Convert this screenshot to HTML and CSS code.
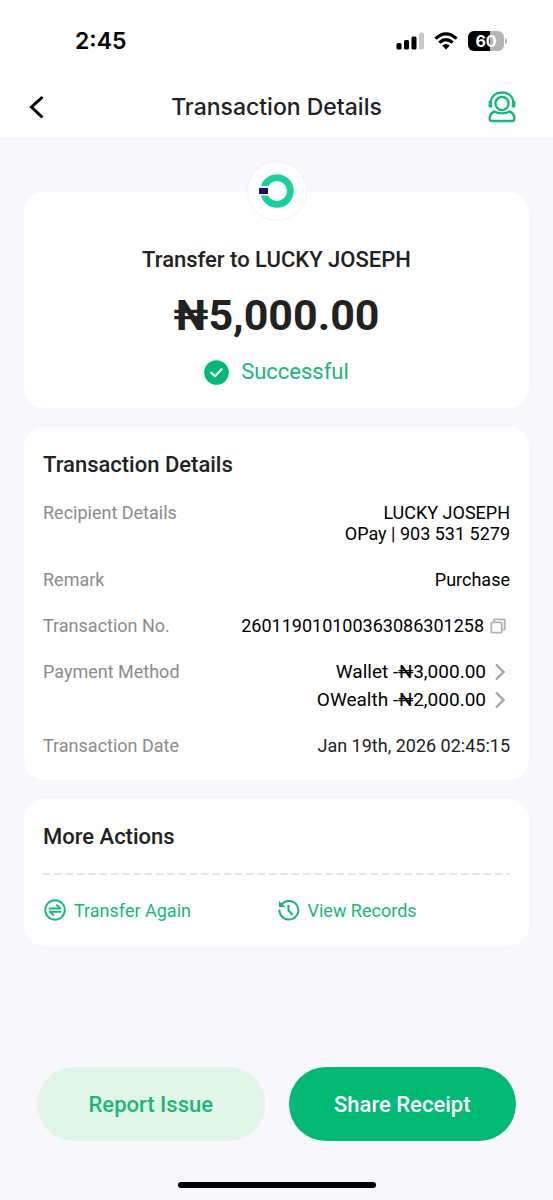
FILE: index.html
```html
<!DOCTYPE html>
<html lang="en">
<head>
<meta charset="utf-8">
<meta name="viewport" content="width=device-width, initial-scale=1">
<title>Transaction Details</title>
<link rel="stylesheet" href="styles.css">
</head>
<body>
<div class="screen">
  <header class="top">
    <div class="status">
      <span class="time">2:45</span>
      <div class="status-icons">
        <svg width="28" height="18" viewBox="0 0 28 18" aria-hidden="true">
          <rect x="0.500" y="11" width="5" height="6.500" rx="1.500"/>
          <rect x="8" y="8" width="5" height="9.500" rx="1.500"/>
          <rect x="15.500" y="4.500" width="5" height="13" rx="1.500"/>
          <rect x="23" y="0.500" width="5" height="17" rx="1.500" fill="#c8c8c8"/>
        </svg>
        <svg width="24" height="18" viewBox="0 0 24 18" fill="none" stroke="#000" stroke-width="3.200" aria-hidden="true">
          <path d="M1.500 6.600Q12 -3 22.500 6.600"/>
          <path d="M5.300 10.600Q12 4.600 18.700 10.600"/>
          <path d="M8.200 13.600Q12 10.400 15.800 13.600L12 17.600Z" fill="#000" stroke="none"/>
        </svg>
        <div class="battery"><span class="battery-body">60</span><span class="battery-tip"></span></div>
      </div>
    </div>
    <nav class="bar">
      <button class="icon-button" aria-label="Back">
        <svg width="32" height="32" viewBox="0 0 32 32" fill="none" stroke="#000" stroke-width="3"><path d="M20.500 6L9.500 16L20.500 26.500"/></svg>
      </button>
      <h1 class="title">Transaction Details</h1>
      <button class="icon-button support" aria-label="Support">
        <svg width="32" height="32" viewBox="0 0 32 32" fill="none" stroke="#1bb57c" stroke-width="2.400" stroke-linejoin="round">
          <circle cx="16" cy="12.500" r="6.600"/>
          <path d="M4.500 11C5.500 5 10 1.500 16 1.500S26.500 5 27.500 11"/>
          <path d="M4.400 10v6.500M27.600 10v6.500" stroke-width="3.600"/>
          <path d="M8.500 20.500C12.500 23 19.500 23 23.500 20.500C26.500 21.500 28.300 24.500 28.300 27.800Q28.300 30 26.300 30H5.700Q3.700 30 3.700 27.800C3.700 24.500 5.500 21.500 8.500 20.500Z"/>
        </svg>
      </button>
    </nav>
  </header>

  <main class="content">
    <section class="card summary">
      <div class="logo">
        <svg width="36" height="36" viewBox="0 0 36 36" aria-hidden="true">
          <circle cx="18" cy="18" r="13.400" fill="none" stroke="#1dcf9f" stroke-width="6.800"/>
          <path d="M0 13h10v9.500H0z" fill="#fff"/>
          <path d="M0 15h9v6H0z" fill="#210f60"/>
        </svg>
      </div>
      <h2 class="recipient">Transfer to LUCKY JOSEPH</h2>
      <p class="amount">₦5,000.00</p>
      <p class="state">
        <svg width="25" height="25" viewBox="0 0 25 25" fill="none" aria-hidden="true"><circle cx="12.500" cy="12.500" r="12.300" fill="#02b875"/><path d="M7.300 12.800L11 16.200L17.600 9.300" stroke="#fff" stroke-width="2.200" stroke-linecap="round" stroke-linejoin="round"/></svg>
        Successful
      </p>
    </section>

    <section class="card">
      <h2 class="heading">Transaction Details</h2>
      <dl class="details">
        <div class="row"><dt>Recipient Details</dt><dd>LUCKY JOSEPH<br>OPay | 903 531 5279</dd></div>
        <div class="row"><dt>Remark</dt><dd>Purchase</dd></div>
        <div class="row"><dt>Transaction No.</dt><dd class="line">260119010100363086301258
          <button class="copy" aria-label="Copy transaction number"><svg width="16" height="16" viewBox="0 0 16 16" fill="none" stroke="#b3b3b3" stroke-width="1.800" stroke-linejoin="round"><rect x="1.300" y="4.300" width="10.400" height="10.400" rx="1"/><path d="M4 4.300V1.300H14.700V11.700H11.700"/></svg></button></dd></div>
        <div class="row"><dt>Payment Method</dt><dd class="methods">
          <a class="line" href="#wallet">Wallet -₦3,000.00 <svg width="18" height="18" viewBox="0 0 18 18" fill="none" stroke="#a3a3a3" stroke-width="2.400"><path d="M4 1.500L11.500 9L4 16.500"/></svg></a>
          <a class="line" href="#owealth">OWealth -₦2,000.00 <svg width="18" height="18" viewBox="0 0 18 18" fill="none" stroke="#a3a3a3" stroke-width="2.400"><path d="M4 1.500L11.500 9L4 16.500"/></svg></a>
        </dd></div>
        <div class="row"><dt>Transaction Date</dt><dd class="date">Jan 19th, 2026 02:45:15</dd></div>
      </dl>
    </section>

    <section class="card">
      <h2 class="heading">More Actions</h2>
      <svg class="divider" height="2" aria-hidden="true"><line x1="0" y1="1" x2="100%" y2="1" stroke="#e6e6e6" stroke-width="2" stroke-dasharray="7.300 4"/></svg>
      <div class="actions">
        <a class="action" href="#transfer">
          <svg width="24" height="24" viewBox="0 0 24 24" fill="none" stroke="#1bb57c" stroke-width="1.900" stroke-linecap="round" stroke-linejoin="round"><circle cx="12" cy="12" r="9.800"/><path d="M6.500 10.500H17.500L13.800 7.300M6.800 13.700H17.300M6.800 13.700L10.400 16.900"/></svg>
          Transfer Again</a>
        <a class="action" href="#records">
          <svg width="24" height="24" viewBox="0 0 24 24" fill="none" stroke="#1bb57c" stroke-width="2"><path d="M2.300 11.500C2.300 17.300 6.600 21.500 12 21.500A9.300 9.300 0 1 0 4.500 6.700"/><path d="M2 3v6h6.500z" fill="#1bb57c" stroke="none"/><path d="M11.500 7v5.500l4 4.200"/></svg>
          View Records</a>
      </div>
    </section>
  </main>

  <footer class="footer">
    <div class="buttons">
      <button class="pill pill-soft">Report Issue</button>
      <button class="pill pill-solid">Share Receipt</button>
    </div>
    <div class="home"></div>
  </footer>
</div>
</body>
</html>
```
FILE: styles.css
```css
* { box-sizing: border-box; }

body {
  margin: 0;
  background: #f7f7fc;
  color: #222;
  font-family: Roboto, "Noto Sans", sans-serif;
  font-size: 18px;
  line-height: 21px;
}

h1, h2, p, dl, dd { margin: 0; }
h1, h2 { font-weight: 500; }
button { padding: 0; border: 0; background: none; font: inherit; cursor: pointer; }
a { color: inherit; text-decoration: none; }
svg { display: block; flex: none; }

.screen { min-height: 100vh; display: flex; flex-direction: column; }

.top { background: #fff; }
.status {
  display: flex;
  justify-content: space-between;
  align-items: center;
  height: 76px;
  padding: 6px 46px 0 75px;
  color: #000;
}
.time { font: 600 23px/28px Inter, sans-serif; }
.status-icons { display: flex; align-items: center; gap: 10px; }
.battery { display: flex; align-items: center; gap: 1px; }
.battery-body {
  width: 36px;
  height: 20px;
  border-radius: 6px;
  background: linear-gradient(to right, #000 60%, #b5b5b5 60%);
  color: #fff;
  font: 700 16px/20px Inter, sans-serif;
  text-align: center;
}
.battery-tip { width: 2px; height: 6px; border-radius: 0 2px 2px 0; background: #b5b5b5; }

.bar {
  display: grid;
  grid-template-columns: 1fr auto 1fr;
  align-items: center;
  height: 61px;
  padding: 0 22px;
}
.icon-button { justify-self: start; }
.support { justify-self: end; margin-right: 13px; }
.title { font: 500 23px/28px Inter, sans-serif; }

.content { display: flex; flex-direction: column; gap: 19px; padding: 55px 24px 24px; }
.card { padding: 26px 19px 24px; border-radius: 20px; background: #fff; }

.summary { display: flex; flex-direction: column; align-items: center; padding: 0 19px 23px; }
.logo {
  display: flex;
  align-items: center;
  justify-content: center;
  width: 60px;
  height: 60px;
  margin-top: -31px;
  border: 1px solid #f2f2f4;
  border-radius: 50%;
  background: #fff;
}
.recipient { margin-top: 26px; font-size: 22px; line-height: 26px; }
.amount { margin-top: 16px; font-size: 43px; line-height: 52px; font-weight: 700; }
.state {
  display: flex;
  align-items: center;
  gap: 12px;
  margin-top: 18px;
  color: #1bb57c;
  font-size: 22px;
  line-height: 26px;
}

.heading { font-size: 22px; line-height: 24px; }
.details { display: flex; flex-direction: column; gap: 25px; margin-top: 25px; }
.row { display: flex; justify-content: space-between; gap: 16px; }
dt { color: #8c8c8c; }
dd { color: #000; text-align: right; }
.line { display: flex; align-items: center; justify-content: flex-end; gap: 6px; }
.copy { padding-right: 4px; }
.methods { display: flex; flex-direction: column; gap: 7px; font-size: 19px; }
.date { color: #222; }

.divider { width: 100%; margin-top: 24px; }
.actions { display: grid; grid-template-columns: 1fr 1fr; margin-top: 23px; color: #1bb57c; }
.action { display: flex; align-items: center; gap: 7px; }

.footer { margin-top: auto; padding: 0 37px 12px; }
.buttons { display: grid; grid-template-columns: 1fr 1fr; gap: 24px; }
.pill { height: 74px; border-radius: 37px; font-size: 22px; font-weight: 500; }
.pill-soft { background: #e1f5e9; color: #1bb57c; }
.pill-solid { background: #02b875; color: #fff; }
.home { width: 198px; height: 6px; margin: 41px auto 0; border-radius: 3px; background: #000; }
```
